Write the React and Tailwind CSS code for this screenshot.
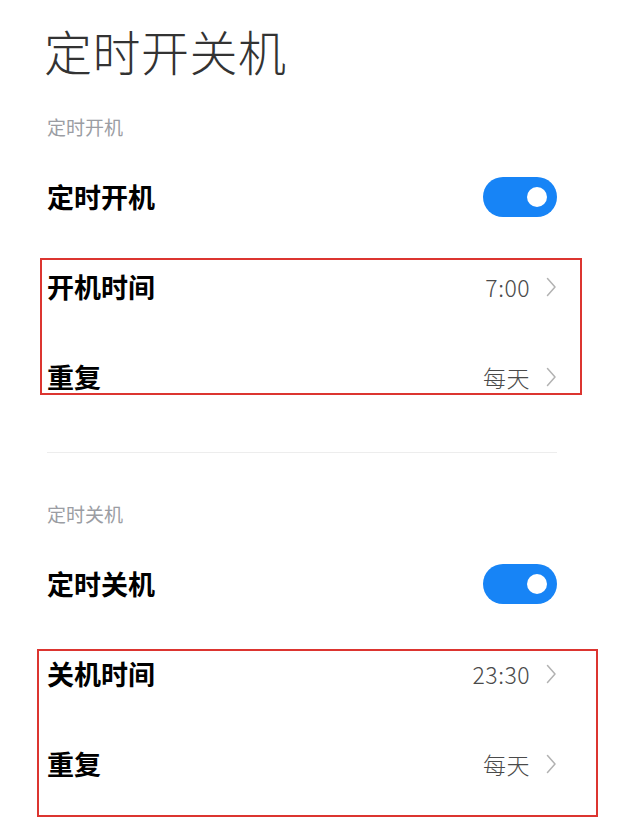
import React from 'react';

const font = { fontFamily: '"Noto Sans CJK SC", "Noto Sans", sans-serif' };

const Chevron = () => (
  <svg width="12" height="20" viewBox="0 0 12 20" fill="none" className="ml-[15px]">
    <path d="M2.5 1.5 L10 10 L2.5 18.5" stroke="#b2b2b2" strokeWidth="1.5" strokeLinecap="round" strokeLinejoin="round" />
  </svg>
);

const Toggle = () => (
  <div className="w-[74px] h-[40px] rounded-full bg-[#1784f6] flex items-center justify-end pr-[10px]">
    <div className="w-[20px] h-[20px] rounded-full bg-white" />
  </div>
);

const SwitchRow = ({ label }) => (
  <div className="h-[90px] flex items-center justify-between pl-[47px] pr-[62px]">
    <span className="text-[27px] font-bold text-black">{label}</span>
    <Toggle />
  </div>
);

const ValueRow = ({ label, value }) => (
  <div className="h-[90px] flex items-center justify-between pl-[47px] pr-[62px]">
    <span className="text-[27px] font-bold text-black">{label}</span>
    <div className="flex items-center">
      <span className="text-[23px] font-light text-[#4a4a4a] tracking-[0.5px]">{value}</span>
      <Chevron />
    </div>
  </div>
);

const SectionLabel = ({ children }) => (
  <div className="h-[50px] flex items-center pl-[47px] text-[19px] text-[#9b9da3]">{children}</div>
);

export default function App() {
  return (
    <div className="w-[619px] h-[826px] bg-white overflow-hidden" style={font}>
      <div className="h-[100px] flex items-center pl-[44px]">
        <h1 className="text-[48px] font-light text-[#333] tracking-[0.5px]">定时开关机</h1>
      </div>
      <div className="h-[2px]" />

      <SectionLabel>定时开机</SectionLabel>
      <SwitchRow label="定时开机" />
      <div className="relative">
        <ValueRow label="开机时间" value="7:00" />
        <ValueRow label="重复" value="每天" />
        <div className="absolute left-[40px] top-[16px] w-[542px] h-[137px] border-2 border-[#dc3530] pointer-events-none" />
      </div>

      <div className="mt-[30px] ml-[47px] mr-[62px] h-px bg-[#ededed]" />

      <div className="h-[36px]" />
      <SectionLabel>定时关机</SectionLabel>
      <SwitchRow label="定时关机" />
      <div className="relative">
        <ValueRow label="关机时间" value="23:30" />
        <ValueRow label="重复" value="每天" />
        <div className="absolute left-[37px] top-[20px] w-[561px] h-[168px] border-2 border-[#dc3530] pointer-events-none" />
      </div>
    </div>
  );
}
